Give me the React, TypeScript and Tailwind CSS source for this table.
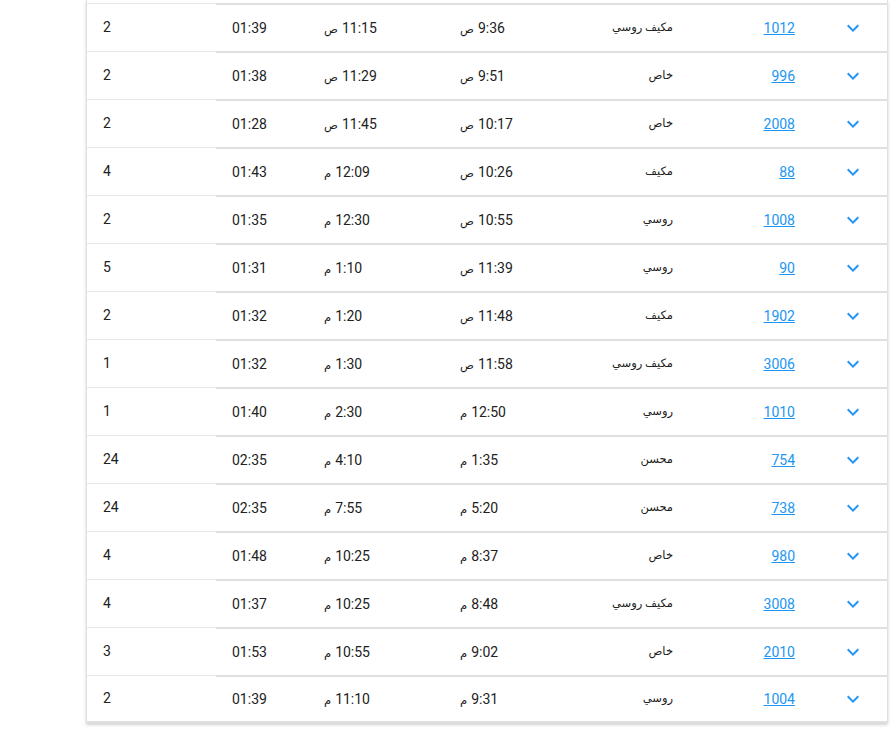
import React from "react";

type Row = [string, string, string, string, string, string];

const rows: Row[] = [
  ["2", "01:39", "11:15 ص", "9:36 ص", "مكيف روسي", "1012"],
  ["2", "01:38", "11:29 ص", "9:51 ص", "خاص", "996"],
  ["2", "01:28", "11:45 ص", "10:17 ص", "خاص", "2008"],
  ["4", "01:43", "12:09 م", "10:26 ص", "مكيف", "88"],
  ["2", "01:35", "12:30 م", "10:55 ص", "روسي", "1008"],
  ["5", "01:31", "1:10 م", "11:39 ص", "روسي", "90"],
  ["2", "01:32", "1:20 م", "11:48 ص", "مكيف", "1902"],
  ["1", "01:32", "1:30 م", "11:58 ص", "مكيف روسي", "3006"],
  ["1", "01:40", "2:30 م", "12:50 م", "روسي", "1010"],
  ["24", "02:35", "4:10 م", "1:35 م", "محسن", "754"],
  ["24", "02:35", "7:55 م", "5:20 م", "محسن", "738"],
  ["4", "01:48", "10:25 م", "8:37 م", "خاص", "980"],
  ["4", "01:37", "10:25 م", "8:48 م", "مكيف روسي", "3008"],
  ["3", "01:53", "10:55 م", "9:02 م", "خاص", "2010"],
  ["2", "01:39", "11:10 م", "9:31 م", "روسي", "1004"],
];

function Chevron() {
  return (
    <svg width="24" height="24" viewBox="0 0 24 24" className="block">
      <path
        d="M7.41 8.59L12 13.17l4.59-4.58L18 10l-6 6-6-6 1.41-1.41z"
        fill="#2196f3"
      />
    </svg>
  );
}

function Time({ v }: { v: string }) {
  const [t, s] = v.split(" ");
  return (
    <span className="inline-flex items-baseline gap-[4px]">
      <span className="text-[11.5px]">{s}</span>
      <span>{t}</span>
    </span>
  );
}

export default function App() {
  return (
    <div
      className="w-[896px] h-[752px] bg-white overflow-hidden"
      style={{ fontFamily: "Roboto, 'DejaVu Sans', sans-serif" }}
    >
      <div className="ml-[86px] w-[802px] border-x border-[#e0e0e0] bg-white shadow-[0_2px_3px_rgba(0,0,0,0.18)]">
        <div className="h-[3px]" />
        {rows.map((r, i) => (
          <div
            key={i}
            className={
              "flex h-[48px] text-[14px] text-[#212121] " +
              (i === rows.length - 1 ? "border-b-2 border-[#e0e0e0]" : "")
            }
          >
            <div className="w-[129px] border-t border-[#e8e8e8] pl-[16px] flex items-center">
              {r[0]}
            </div>
            <div className="flex-1 flex items-center border-t-2 border-[#e0e0e0]">
              <div className="w-[92px] pl-[16px]">{r[1]}</div>
              <div className="w-[136px] pl-[16px]">
                <Time v={r[2]} />
              </div>
              <div className="w-[116px] pl-[16px]">
                <Time v={r[3]} />
              </div>
              <div className="w-[129px] pr-[16px] text-right text-[11.5px]">
                <span dir="rtl">{r[4]}</span>
              </div>
              <div className="w-[122px] pr-[16px] text-right">
                <a href="#" className="text-[#2196f3] underline">
                  {r[5]}
                </a>
              </div>
              <div className="flex-1 pl-[30px]">
                <Chevron />
              </div>
            </div>
          </div>
        ))}
      </div>
    </div>
  );
}
